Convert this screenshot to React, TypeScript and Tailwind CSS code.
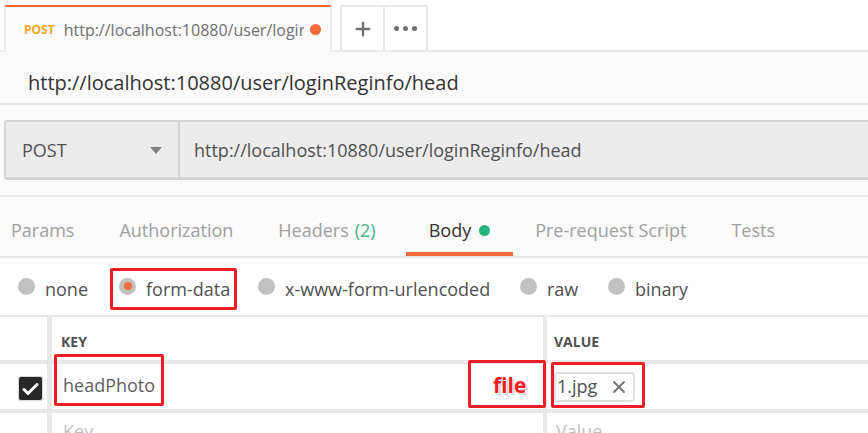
import { X, Plus } from "lucide-react";

const font = { fontFamily: '"Open Sans", "Liberation Sans", sans-serif' };

function Radio({ label, checked }: { label: string; checked?: boolean }) {
  return (
    <div className="flex items-center gap-[10px]">
      <span className="flex h-[17px] w-[17px] -translate-y-[3px] items-center justify-center rounded-full bg-[#c1c1c1]">
        {checked && <span className="h-[8px] w-[8px] rounded-full bg-[#f26b3a]" />}
      </span>
      <span className="text-[18px] text-[#505050]">{label}</span>
    </div>
  );
}

export default function App() {
  return (
    <div className="h-[433px] w-[868px] overflow-hidden bg-white" style={font}>
      {/* tab strip */}
      <div className="flex h-[52px] items-end border-b-2 border-[#e8e8e8] bg-white pl-[4px]">
        <div className="relative -mb-[2px] flex h-[47px] w-[328px] items-center border-x-2 border-t-2 border-x-[#ececec] border-t-[#f26b3a] bg-[#fafafa] pl-[18px] pr-[9px]">
          <span className="text-[12px] font-bold text-[#f5a623]">POST</span>
          <span className="ml-[9px] flex-1 overflow-hidden whitespace-nowrap text-[16px] text-[#707070]">
            http://localhost:10880/user/loginReginfo/head
          </span>
          <span className="ml-[6px] h-[11px] w-[11px] rounded-full bg-[#f26b3a]" />
        </div>
        <div className="ml-[8px] flex h-[45px] rounded-t-[3px] border-x-2 border-t-2 border-[#e8e8e8] bg-white">
          <div className="flex w-[43px] items-center justify-center border-r-2 border-[#e8e8e8]">
            <Plus size={22} strokeWidth={2.5} color="#707070" />
          </div>
          <div className="flex w-[41px] items-center justify-center gap-[4px]">
            <span className="h-[5px] w-[5px] rounded-full bg-[#707070]" />
            <span className="h-[5px] w-[5px] rounded-full bg-[#707070]" />
            <span className="h-[5px] w-[5px] rounded-full bg-[#707070]" />
          </div>
        </div>
      </div>

      {/* request name */}
      <div className="flex h-[53px] items-center border-b-2 border-[#e8e8e8] bg-[#fafafa] pl-[28px] pt-[11px]">
        <span className="text-[20px] text-[#333]">http://localhost:10880/user/loginReginfo/head</span>
      </div>

      {/* request bar */}
      <div className="border-b-2 border-[#ececec] bg-[#fafafa] pb-[15px] pl-[4px] pt-[15px]">
        <div className="flex h-[60px] rounded-l-[3px] border-b-[3px] border-l-2 border-t-2 border-[#d4d4d4] bg-[#ececec]">
          <div className="flex w-[174px] items-center justify-between border-r-2 border-[#d4d4d4] pl-[16px] pr-[16px] pt-[2px]">
            <span className="text-[18px] text-[#505050]">POST</span>
            <span className="h-0 w-0 border-x-[6px] border-t-[7px] border-x-transparent border-t-[#808080]" />
          </div>
          <div className="flex items-center pl-[14px] pt-[2px] text-[18px] text-[#505050]">
            http://localhost:10880/user/loginReginfo/head
          </div>
        </div>
      </div>

      {/* section tabs */}
      <div className="flex h-[61px] items-stretch border-b-2 border-[#e8e8e8] bg-[#fafafa] text-[18px] text-[#a0a0a0]">
        <div className="flex items-center pl-[11px] pt-[8px]">Params</div>
        <div className="ml-[45px] flex items-center pt-[8px]">Authorization</div>
        <div className="ml-[45px] flex items-center pt-[8px]">
          Headers <span className="ml-[6px] text-[#3eb489]">(2)</span>
        </div>
        <div className="ml-[30px] flex items-center border-b-4 border-[#f26b3a] px-[23px] pt-[12px] text-[#333]">
          Body
          <span className="ml-[8px] h-[11px] w-[11px] rounded-full bg-[#26b47f]" />
        </div>
        <div className="ml-[22px] flex items-center pt-[8px]">Pre-request Script</div>
        <div className="ml-[45px] flex items-center pt-[8px]">Tests</div>
      </div>

      {/* body type radios */}
      <div className="flex h-[59px] items-center border-b-2 border-[#e8e8e8] pl-[18px] pt-[5px]">
        <div className="w-[92px]">
          <Radio label="none" />
        </div>
        <div className="flex h-[42px] w-[127px] items-center rounded-[2px] border-[3px] border-[#ee1c25] pl-[6px]">
          <Radio label="form-data" checked />
        </div>
        <div className="ml-[21px] w-[262px]">
          <Radio label="x-www-form-urlencoded" />
        </div>
        <div className="w-[88px]">
          <Radio label="raw" />
        </div>
        <Radio label="binary" />
      </div>

      {/* key/value table */}
      <div className="flex h-[47px] border-b-4 border-[#e8e8e8]">
        <div className="w-[52px] border-r-[5px] border-[#e8e8e8]" />
        <div className="flex w-[495px] items-center border-r-4 border-[#e8e8e8] pl-[9px] pt-[5px] text-[14px] font-bold text-[#505050]">
          KEY
        </div>
        <div className="flex flex-1 items-center pl-[7px] pt-[5px] text-[14px] font-bold text-[#505050]">VALUE</div>
      </div>
      <div className="flex h-[49px] border-b-4 border-[#e8e8e8]">
        <div className="flex w-[52px] items-center border-r-[5px] border-[#e8e8e8] pl-[18px] pt-[4px]">
          <span className="flex h-[25px] w-[25px] items-center justify-center rounded-[3px] border border-[#d8d8d8] bg-[#282828]">
            <svg width="17" height="14" viewBox="0 0 17 14" fill="none">
              <path d="M2 7.5L6 11.5L15 2.5" stroke="white" strokeWidth="3" strokeLinecap="round" strokeLinejoin="round" />
            </svg>
          </span>
        </div>
        <div className="relative w-[495px] border-r-4 border-[#e8e8e8]">
          <div className="absolute left-[2px] top-[-10px] flex h-[52px] w-[110px] items-end rounded-[2px] border-[3px] border-[#ee1c25] pb-[4px] pl-[6px] text-[18px] text-[#606060]">
            headPhoto
          </div>
          <div className="absolute right-[-3px] top-[-4px] flex h-[48px] w-[78px] items-center rounded-[2px] border-[3px] border-[#ee1c25] pl-[22px] pt-[4px] text-[21px] font-bold text-[#ee1c25] [text-shadow:1px_1px_0_#fff,2px_2px_1px_#bbb]">
            file
          </div>
        </div>
        <div className="relative flex-1">
          <div className="absolute left-[4px] top-[-2px] flex h-[46px] w-[94px] items-center rounded-[2px] border-[3px] border-[#ee1c25] pt-[3px]">
            <div className="flex h-[30px] items-center gap-[12px] rounded-[4px] border-2 border-[#e0e0e0] pl-[1px] pr-[4px] text-[18px] text-[#505050]">
              1.jpg
              <X size={20} strokeWidth={2.2} color="#707070" />
            </div>
          </div>
        </div>
      </div>
      <div className="flex h-[40px]">
        <div className="w-[52px] border-r-[5px] border-[#e8e8e8]" />
        <div className="flex w-[495px] items-start border-r-4 border-[#e8e8e8] pl-[11px] pt-[5px] text-[18px] text-[#c0c0c0]">
          Key
        </div>
        <div className="flex flex-1 items-start pl-[9px] pt-[5px] text-[18px] text-[#c0c0c0]">Value</div>
      </div>
    </div>
  );
}
